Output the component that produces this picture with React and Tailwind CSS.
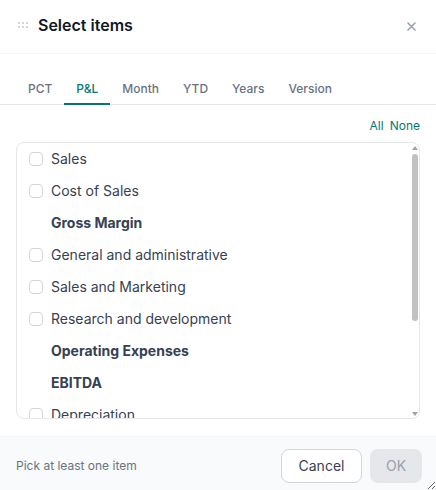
import React, { useEffect, useRef, useState } from 'react';

const TABS = ['PCT', 'P&L', 'Month', 'YTD', 'Years', 'Version'];

// P&L lines; totals are headers without a checkbox
const ITEMS = [
  { label: 'Sales' },
  { label: 'Cost of Sales' },
  { label: 'Gross Margin', total: true },
  { label: 'General and administrative' },
  { label: 'Sales and Marketing' },
  { label: 'Research and development' },
  { label: 'Operating Expenses', total: true },
  { label: 'EBITDA', total: true },
  { label: 'Depreciation' },
  { label: 'Amortization' },
  { label: 'EBIT', total: true },
  { label: 'Interest Expense' },
  { label: 'Net Income', total: true },
];

const DragDots = () => (
  <svg width="10" height="6" viewBox="0 0 10 6" className="text-gray-300">
    {[1, 5, 9].map((x) =>
      [1, 5].map((y) => <rect key={`${x}-${y}`} x={x - 1} y={y - 1} width="2" height="2" fill="currentColor" />)
    )}
  </svg>
);

const App = () => {
  const [tab, setTab] = useState('P&L');
  const [checked, setChecked] = useState({});
  const [thumb, setThumb] = useState({ top: 0, size: 66 });
  const listRef = useRef(null);

  // keep the drawn scrollbar thumb in sync with the list
  const syncThumb = () => {
    const el = listRef.current;
    if (!el) return;
    setThumb({
      top: (el.scrollTop / el.scrollHeight) * 100,
      size: Math.min(100, (el.clientHeight / el.scrollHeight) * 100),
    });
  };

  useEffect(syncThumb, []);

  const toggle = (label) => setChecked((c) => ({ ...c, [label]: !c[label] }));
  const anyChecked = Object.values(checked).some(Boolean);

  return (
    <div className="w-[436px] h-[490px] flex flex-col bg-white resize overflow-hidden font-['Inter',sans-serif] text-gray-700">
      {/* Header */}
      <div className="h-[54px] shrink-0 flex items-center pl-[18px] pr-5 pb-[3px] border-b border-gray-100">
        <DragDots />
        <h2 className="ml-[10px] text-base font-semibold text-gray-900">Select items</h2>
        <button className="ml-auto mt-[3px] text-gray-400 hover:text-gray-600">
          <svg width="9" height="9" viewBox="0 0 9 9" stroke="currentColor" strokeWidth="1.6" strokeLinecap="round">
            <path d="M1 1l7 7M8 1l-7 7" />
          </svg>
        </button>
      </div>

      {/* Body */}
      <div className="flex-1 min-h-0 flex flex-col px-4 pb-[17px]">
        <div className="mt-[17px] flex border-b border-gray-200 -mx-4 px-4">
          {TABS.map((t) => (
            <button
              key={t}
              onClick={() => setTab(t)}
              className={`h-[34px] px-3 pt-1 text-xs font-medium -mb-px border-b-2 ${
                tab === t ? 'text-teal-700 border-teal-700' : 'text-gray-500 border-transparent'
              }`}
            >
              {t}
            </button>
          ))}
        </div>

        <div className="mt-[13px] mb-2 flex justify-end gap-[6px] text-xs leading-4 text-teal-700">
          <button onClick={() => setChecked(Object.fromEntries(ITEMS.filter((i) => !i.total).map((i) => [i.label, true])))}>
            All
          </button>
          <button onClick={() => setChecked({})}>None</button>
        </div>

        <div className="relative flex-1 min-h-0 border border-gray-200 rounded-lg overflow-hidden">
          <div ref={listRef} onScroll={syncThumb} className="h-full overflow-y-auto [scrollbar-width:none]">
            {ITEMS.map((item) =>
              item.total ? (
                <div key={item.label} className="h-8 flex items-center pl-[34px] text-sm font-bold text-gray-700">
                  {item.label}
                </div>
              ) : (
                <label key={item.label} className="h-8 flex items-center gap-2 pl-3 text-sm text-gray-700 cursor-pointer">
                  <span
                    onClick={() => toggle(item.label)}
                    className={`w-[14px] h-[14px] rounded-[4px] border ${
                      checked[item.label] ? 'bg-teal-700 border-teal-700' : 'border-gray-300 bg-white'
                    }`}
                  />
                  {item.label}
                </label>
              )
            )}
          </div>

          {/* scrollbar */}
          <div className="absolute right-0 inset-y-0 w-[8px] flex flex-col pointer-events-none">
            <div className="h-[11px] flex items-center justify-center pb-[2px]">
              <span className="w-0 h-0 border-x-[3px] border-x-transparent border-b-[4px] border-b-[#a3a3a3]" />
            </div>
            <div className="relative flex-1">
              <div
                className="absolute left-[1px] right-[1px] rounded-[3px] bg-[#c1c1c1]"
                style={{ top: `${thumb.top}%`, height: `${thumb.size}%` }}
              />
            </div>
            <div className="h-[11px] flex items-center justify-center pt-[2px]">
              <span className="w-0 h-0 border-x-[3px] border-x-transparent border-t-[4px] border-t-[#a3a3a3]" />
            </div>
          </div>
        </div>
      </div>

      {/* Footer */}
      <div className="h-[54px] shrink-0 flex items-center pl-4 pr-[14px] pt-[5px] bg-gray-50 border-t border-gray-100">
        <span className="text-xs text-gray-500">Pick at least one item</span>
        <div className="ml-auto flex gap-2">
          <button className="h-[34px] w-[81px] rounded-lg border border-gray-300 bg-white text-sm text-gray-700">
            Cancel
          </button>
          <button
            disabled={!anyChecked}
            className="h-[34px] w-[52px] rounded-lg bg-gray-200 text-sm text-gray-400 disabled:cursor-not-allowed"
          >
            OK
          </button>
        </div>
      </div>
    </div>
  );
};

export default App;
